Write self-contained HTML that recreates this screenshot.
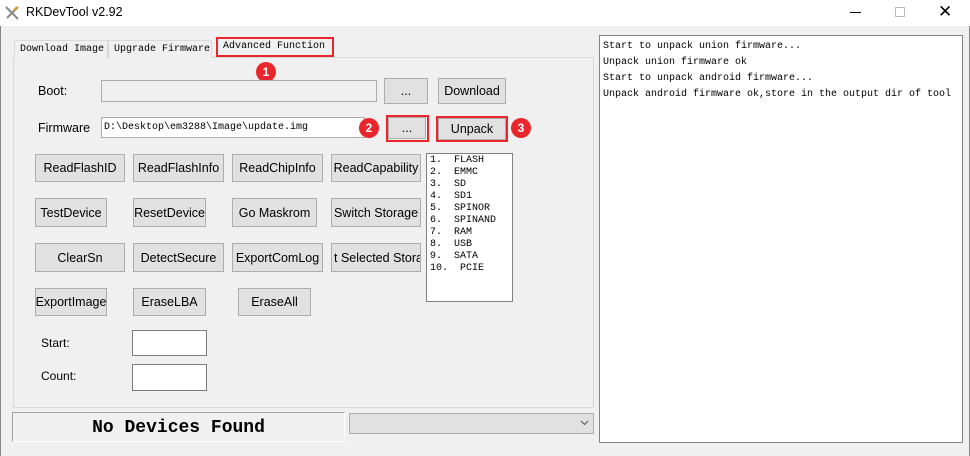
<!DOCTYPE html>
<html><head><style>
*{box-sizing:border-box;margin:0;padding:0}
body{width:970px;height:456px;background:#f0f0f0;position:relative;overflow:hidden;font-family:"Liberation Sans",sans-serif;font-size:12px;color:#000}
.a{position:absolute}
.btn{position:absolute;background:#e1e1e1;border:1px solid #adadad;display:flex;align-items:center;justify-content:center;font-size:12.5px;white-space:nowrap;overflow:hidden}
.inp{position:absolute;background:#fff;border:1px solid #7a7a7a}
.red{position:absolute;border:2px solid #e8262b}
.c{position:absolute;width:20px;height:20px;border-radius:50%;background:#e8262b;color:#fff;font-size:12px;font-weight:bold;display:flex;align-items:center;justify-content:center}
.mono{font-family:"Liberation Mono",monospace;font-size:10px}
.tab{position:absolute;top:40px;height:18px;font-family:"Liberation Mono",monospace;font-size:10px;line-height:18px;padding-left:5px;background:#f0f0f0;border:1px solid #d9d9d9;border-bottom:none}
</style></head><body>
<div class="a" style="left:0;top:0;width:970px;height:26px;background:#fff"></div>
<svg class="a" style="left:4px;top:5px" width="16" height="16"><path d="M2 2L14 14M14 2L3 13" stroke="#888" stroke-width="2"/><path d="M10 5l3-3" stroke="#e0a020" stroke-width="2"/></svg>
<div class="a" style="left:26px;top:5px;font-size:12.5px">RKDevTool v2.92</div>
<div class="a" style="left:850px;top:12px;width:11px;height:1px;background:#000"></div>
<div class="a" style="left:895px;top:7px;width:10px;height:10px;border:1px solid #bbb"></div>
<div class="a" style="left:938px;top:2px;font-size:17px;font-weight:100">✕</div>
<div class="a" style="left:0;top:26px;width:1px;height:430px;background:#888"></div>
<div class="a" style="left:969px;top:26px;width:1px;height:430px;background:#888"></div>

<div class="a" style="left:13px;top:57px;width:581px;height:351px;border:1px solid #d9d9d9;background:#f0f0f0"></div>
<div class="tab" style="left:14px;width:94px">Download Image</div>
<div class="tab" style="left:108px;width:104px">Upgrade Firmware</div>
<div class="a mono" style="left:223px;top:41px">Advanced Function</div>
<div class="red" style="left:216px;top:37px;width:118px;height:20px"></div>
<div class="c" style="left:256px;top:62px">1</div>

<div class="a" style="left:38px;top:84px;font-size:12.5px">Boot:</div>
<div class="inp" style="left:101px;top:80px;width:276px;height:22px;background:#f0f0f0;border-color:#adadad"></div>
<div class="btn" style="left:384px;top:78px;width:44px;height:26px">...</div>
<div class="btn" style="left:438px;top:78px;width:68px;height:26px">Download</div>

<div class="a" style="left:38px;top:121px;font-size:12.5px">Firmware</div>
<div class="inp mono" style="left:101px;top:117px;width:264px;height:21px;padding:4px 2px;border-color:#adadad">D:\Desktop\em3288\Image\update.img</div>
<div class="c" style="left:359px;top:118px">2</div>
<div class="btn" style="left:388px;top:117px;width:38px;height:22px">...</div>
<div class="red" style="left:386px;top:115px;width:43px;height:27px"></div>
<div class="btn" style="left:438px;top:118px;width:68px;height:22px">Unpack</div>
<div class="red" style="left:436px;top:116px;width:72px;height:26px"></div>
<div class="c" style="left:511px;top:118px">3</div>

<div class="btn" style="left:35px;top:154px;width:90px;height:28px">ReadFlashID</div>
<div class="btn" style="left:133px;top:154px;width:91px;height:28px">ReadFlashInfo</div>
<div class="btn" style="left:232px;top:154px;width:91px;height:28px">ReadChipInfo</div>
<div class="btn" style="left:331px;top:154px;width:90px;height:28px">ReadCapability</div>
<div class="btn" style="left:35px;top:198px;width:72px;height:29px">TestDevice</div>
<div class="btn" style="left:133px;top:198px;width:73px;height:29px">ResetDevice</div>
<div class="btn" style="left:232px;top:198px;width:85px;height:29px">Go Maskrom</div>
<div class="btn" style="left:331px;top:198px;width:90px;height:29px">Switch Storage</div>
<div class="btn" style="left:35px;top:243px;width:90px;height:29px">ClearSn</div>
<div class="btn" style="left:133px;top:243px;width:91px;height:29px">DetectSecure</div>
<div class="btn" style="left:232px;top:243px;width:91px;height:29px">ExportComLog</div>
<div class="btn" style="left:331px;top:243px;width:90px;height:29px;justify-content:flex-start;padding-left:2px">t Selected Stora</div>
<div class="btn" style="left:35px;top:288px;width:72px;height:28px">ExportImage</div>
<div class="btn" style="left:133px;top:288px;width:73px;height:28px">EraseLBA</div>
<div class="btn" style="left:238px;top:288px;width:73px;height:28px">EraseAll</div>

<div class="inp mono" style="left:426px;top:153px;width:87px;height:149px;padding:1px 3px;line-height:12px;border-color:#828282">1.&nbsp;&nbsp;FLASH<br>2.&nbsp;&nbsp;EMMC<br>3.&nbsp;&nbsp;SD<br>4.&nbsp;&nbsp;SD1<br>5.&nbsp;&nbsp;SPINOR<br>6.&nbsp;&nbsp;SPINAND<br>7.&nbsp;&nbsp;RAM<br>8.&nbsp;&nbsp;USB<br>9.&nbsp;&nbsp;SATA<br>10.&nbsp;&nbsp;PCIE</div>

<div class="a" style="left:41px;top:336px">Start:</div>
<div class="inp" style="left:132px;top:330px;width:75px;height:26px"></div>
<div class="a" style="left:41px;top:369px">Count:</div>
<div class="inp" style="left:132px;top:364px;width:75px;height:27px"></div>

<div class="a" style="left:12px;top:412px;width:333px;height:30px;border-top:1px solid #a0a0a0;border-left:1px solid #a0a0a0;border-right:1px solid #fff;border-bottom:1px solid #fff;font-family:'Liberation Mono',monospace;font-size:18px;font-weight:bold;text-align:center;line-height:30px">No Devices Found</div>
<div class="a" style="left:349px;top:413px;width:245px;height:21px;background:#e1e1e1;border:1px solid #adadad"></div>
<svg class="a" style="left:580px;top:419px" width="9" height="8"><path d="M1 2l3.5 3.5L8 2" stroke="#555" fill="none"/></svg>

<div class="inp mono" style="left:599px;top:35px;width:364px;height:408px;padding:3px 3px;line-height:16px;border-color:#828282;font-size:10px">Start to unpack union firmware...<br>Unpack union firmware ok<br>Start to unpack android firmware...<br>Unpack android firmware ok,store in the output dir of tool</div>
</body></html>
